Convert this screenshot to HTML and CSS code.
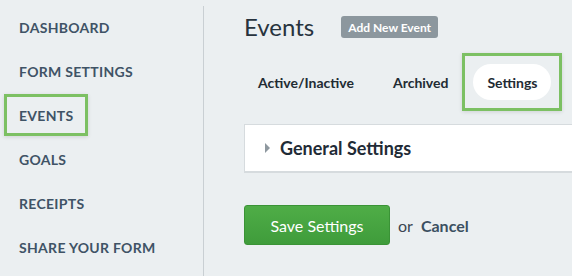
FILE: index.html
```html
<!DOCTYPE html>
<html lang="en">
<head>
	<meta charset="UTF-8">
	<title>Events - Settings</title>
	<link rel="stylesheet" href="styles.css">
</head>
<body>
	<div class="page">
		<div class="sidebar">
			<a href="javascript:;" class="nav">DASHBOARD</a>
			<a href="javascript:;" class="nav">FORM SETTINGS</a>
			<a href="javascript:;" class="nav active">EVENTS</a>
			<a href="javascript:;" class="nav">GOALS</a>
			<a href="javascript:;" class="nav">RECEIPTS</a>
			<a href="javascript:;" class="nav">SHARE YOUR FORM</a>
		</div>
		<div class="main">
			<div class="head">
				<h1>Events</h1>
				<a href="javascript:;" class="badge">Add New Event</a>
			</div>
			<div class="tabs">
				<a href="javascript:;" class="tab first">Active/Inactive</a>
				<a href="javascript:;" class="tab">Archived</a>
				<span class="tabMark"><a href="javascript:;" class="tab current">Settings</a></span>
			</div>
			<div class="panel">
				<span class="caret"></span>
				<span class="panelTitle">General Settings</span>
			</div>
			<div class="actions">
				<a href="javascript:;" class="btnSave">Save Settings</a>
				<span class="or">or</span>
				<a href="javascript:;" class="cancel">Cancel</a>
			</div>
		</div>
	</div>
</body>
</html>
```

FILE: styles.css
```css
*{
	margin: 0;
	padding: 0;
	box-sizing: border-box;
}
html, body{
	height: 100%;
}
body{
	background-color: #ebeff1;
	font-family: Lato, "Open Sans", sans-serif;
	overflow: hidden;
}
a{
	text-decoration: none;
}
.page{
	display: flex;
	height: 100%;
}
.sidebar{
	width: 204px;
	flex-shrink: 0;
	margin-top: 6px;
	border-right: 1px solid #c9cfd3;
	display: flex;
	flex-direction: column;
	align-items: flex-start;
}
.sidebar .nav{
	display: flex;
	align-items: center;
	height: 42px;
	margin: 0 0 2px 4px;
	padding: 0 12px 0 12px;
	border: 3px solid transparent;
	color: #3f5366;
	font-size: 14px;
	font-weight: 700;
	letter-spacing: 0.3px;
}
.sidebar .nav.active{
	border-color: #7cc063;
	box-shadow: 0 1px 4px rgba(0, 0, 0, 0.12);
}
.main{
	flex: 1;
	padding: 16px 0 0 40px;
	min-width: 0;
}
.head{
	display: flex;
	align-items: center;
	height: 22px;
}
.head h1{
	font-size: 24px;
	font-weight: 400;
	color: #27333e;
	line-height: 22px;
	margin-right: 27px;
}
.badge{
	display: flex;
	align-items: center;
	height: 22px;
	padding: 0 7px;
	border-radius: 3px;
	background-color: #8c979e;
	color: #fff;
	font-size: 12px;
	font-weight: 700;
}
.tabs{
	display: flex;
	align-items: center;
	margin-top: 15px;
}
.tab{
	display: flex;
	align-items: center;
	height: 36px;
	padding: 0 14px;
	border-radius: 18px;
	color: #222b33;
	font-size: 14px;
	font-weight: 700;
}
.tab.first{
	margin-right: 11px;
}
.tabMark{
	display: flex;
	padding: 8px;
	border: 3px solid #7cc063;
	box-shadow: 0 1px 4px rgba(0, 0, 0, 0.12);
}
.tab.current{
	background-color: #fff;
}
.panel{
	display: flex;
	align-items: center;
	height: 49px;
	margin-top: 13px;
	padding-left: 20px;
	background-color: #fff;
	border: 1px solid #d6dbde;
	border-right: 0;
	border-bottom-width: 2px;
}
.caret{
	width: 0;
	height: 0;
	border-top: 5px solid transparent;
	border-bottom: 5px solid transparent;
	border-left: 5px solid #8e989f;
	margin-right: 10px;
}
.panelTitle{
	font-size: 18px;
	font-weight: 700;
	color: #1f2b36;
}
.actions{
	display: flex;
	align-items: center;
	margin-top: 32px;
}
.btnSave{
	display: flex;
	align-items: center;
	justify-content: center;
	width: 146px;
	height: 40px;
	border: 1px solid #3a9336;
	border-radius: 3px;
	background: linear-gradient(#4fad47, #3f9c3b);
	color: #fff;
	font-size: 16px;
}
.or{
	margin: 0 8px;
	font-size: 16px;
	color: #3a4651;
}
.cancel{
	font-size: 16px;
	font-weight: 700;
	color: #3b4f61;
}
```
